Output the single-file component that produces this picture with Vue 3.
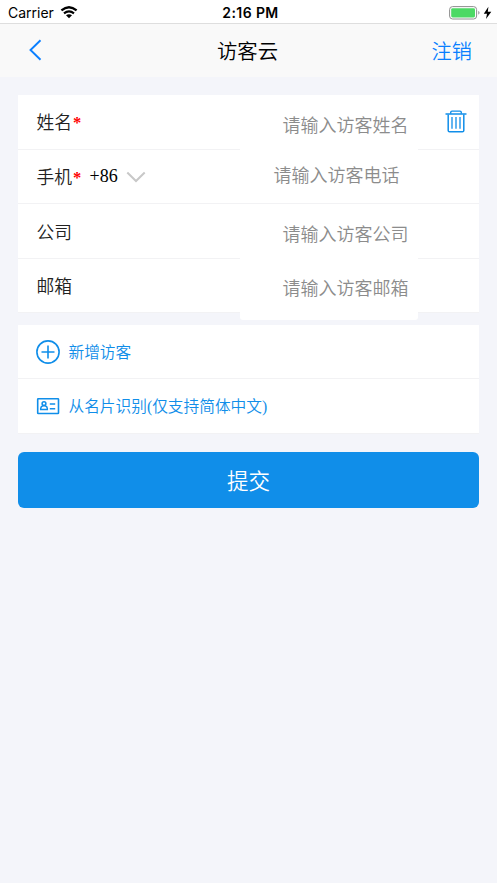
<script setup>
import { reactive } from 'vue'

const fields = reactive([
  { key: 'name', label: '姓名', required: true, hint: '请输入访客姓名', removable: true, value: '' },
  { key: 'phone', label: '手机', required: true, hint: '请输入访客电话', code: '+86', value: '' },
  { key: 'company', label: '公司', hint: '请输入访客公司', value: '' },
  { key: 'email', label: '邮箱', hint: '请输入访客邮箱', value: '' }
])
</script>

<template>
  <div class="screen">
    <div class="status">
      <div class="carrier">
        <span>Carrier</span>
        <svg width="18" height="13" viewBox="0 0 18 13">
          <path d="M1.4 4.4 Q9 -2 16.6 4.4" fill="none" stroke="#000" stroke-width="2.3" />
          <path d="M4 7.4 Q9 3.2 14 7.4" fill="none" stroke="#000" stroke-width="2.1" />
          <path d="M6 9.3 Q9 7 12 9.3 L9 12.3Z" />
        </svg>
      </div>
      <span class="time">2:16 PM</span>
      <div class="power">
        <svg width="43" height="14" viewBox="0 0 43 14">
          <rect x=".6" y=".6" width="27" height="12.4" rx="3" fill="#fff" stroke="#8e8e8e" stroke-width="1" />
          <rect x="2.2" y="2.2" width="23.8" height="9.2" rx="1.4" fill="#4cd964" />
          <path d="M29.3 4.8 Q31.8 6.8 29.3 8.8Z" fill="#8e8e8e" />
          <path d="M39.4 .8 L34.8 7.7 H38 L37 13 L42.3 5.8 H38.8Z" />
        </svg>
      </div>
    </div>

    <header class="nav">
      <svg class="back" width="14" height="22" viewBox="0 0 14 22">
        <path d="M12.5 1.3 L2.5 11 L12.5 20.7" fill="none" stroke="#0a7fff" stroke-width="1.9" />
      </svg>
      <h1>访客云</h1>
      <a class="logout">注销</a>
    </header>

    <main>
      <section class="card form">
        <div v-for="f in fields" :key="f.key" class="row" :class="f.key">
          <label>{{ f.label }}<i v-if="f.required">*</i></label>
          <span v-if="f.code" class="code">{{ f.code }}
            <svg width="20" height="12" viewBox="0 0 20 12">
              <path d="M1.3 1.5 L10 10 L18.7 1.5" fill="none" stroke="#c8c8c8" stroke-width="2" />
            </svg>
          </span>
          <input v-model="f.value" :placeholder="f.hint" />
          <div class="tail">
            <svg v-if="f.removable" width="22" height="23" viewBox="0 0 22 23" fill="none" stroke="#108ee9">
              <path d="M.5 4 H21.5" stroke-width="1.5" />
              <path d="M5.7 3.8 V2.4 Q5.7 1.1 7 1.1 H15 Q16.3 1.1 16.3 2.4 V3.8" stroke-width="1.4" />
              <path d="M3.2 4.5 V20.4 Q3.2 21.8 4.6 21.8 H17.4 Q18.8 21.8 18.8 20.4 V4.5" stroke-width="1.5" />
              <path d="M7 7 V18.8 M11 7 V18.8 M15 7 V18.8" stroke-width="1.3" />
            </svg>
          </div>
        </div>
      </section>

      <section class="card actions">
        <div class="action">
          <svg width="24" height="24" viewBox="0 0 24 24" fill="none" stroke="#108ee9" stroke-width="1.6">
            <circle cx="12" cy="12" r="11.1" />
            <path d="M5.5 12 H18.5 M12 5.5 V18.5" />
          </svg>
          <span>新增访客</span>
        </div>
        <div class="action">
          <svg width="24" height="24" viewBox="0 0 24 24" fill="none" stroke="#108ee9" stroke-width="1.6">
            <rect x="1.7" y="4.7" width="20.8" height="14.8" rx=".6" />
            <circle cx="8" cy="9.6" r="1.9" stroke-width="1.5" />
            <path d="M4.7 15.6 V14.3 Q4.9 12.4 6.8 11.7 H9.2 Q11.2 12.4 11.3 14.3 V15.6Z" stroke-width="1.5" />
            <path d="M13.8 10 H19.2 M13.8 14.8 H19.2" stroke-width="1.5" />
          </svg>
          <span>从名片识别(仅支持简体中文)</span>
        </div>
      </section>

      <button class="submit">提交</button>
    </main>
  </div>
</template>

<style>
body {
  margin: 0;
  background: #f4f5fa;
}
</style>

<style scoped>
.screen {
  min-height: 883px;
  box-sizing: border-box;
  background: #f4f5fa;
  font-family: "Liberation Serif", "Noto Sans CJK SC DemiLight", "Noto Sans CJK SC", serif;
  font-weight: 350;
}
.status {
  display: grid;
  grid-template-columns: 1fr auto 1fr;
  align-items: center;
  height: 24px;
  box-sizing: border-box;
  padding: 2px 5px 0 8px;
  border-bottom: 1px solid #dedede;
  background: #fff;
  font-family: Inter, sans-serif;
  font-size: 14px;
  font-weight: 400;
  color: #000;
}
.carrier {
  display: flex;
  align-items: center;
  gap: 6px;
}
.time {
  padding-left: 1px;
  font-weight: 600;
  letter-spacing: .4px;
}
.power {
  display: flex;
  justify-content: flex-end;
}
.nav {
  display: grid;
  grid-template-columns: 1fr auto 1fr;
  align-items: center;
  box-sizing: border-box;
  height: 53px;
  padding: 0 25px 2px 28px;
  background: #f9f9f9;
}
.nav h1 {
  margin: 0 5px 0 0;
  font-size: 20.4px;
  font-weight: 350;
  color: #000;
}
.logout {
  justify-self: end;
  padding-top: 1px;
  font-size: 20.2px;
  color: #0a7fff;
}
main {
  display: flex;
  flex-direction: column;
  padding: 18px 18px 0;
}
.card {
  background: #fff;
}
.row {
  display: flex;
  align-items: center;
  box-sizing: border-box;
  height: 54.4px;
  padding-left: 18.5px;
  border-bottom: 1px solid #f2f2f4;
}
.name {
  height: 55px;
}
label {
  padding-bottom: 1px;
  font-size: 17.8px;
  color: #222;
}
.name label,
.phone label {
  padding-bottom: 2px;
}
label i {
  display: inline-block;
  width: 9.5px;
  padding-left: 1px;
  box-sizing: border-box;
  font-size: 16.5px;
  font-style: normal;
  font-weight: 700;
  line-height: 1;
  vertical-align: 1px;
  color: #f00;
}
.code {
  display: flex;
  align-items: center;
  gap: 8px;
  margin-left: 8px;
  font-size: 18px;
  color: #000;
}
input {
  width: 178px;
  height: 60px;
  box-sizing: border-box;
  flex: none;
  margin: 5px 0 -4px auto;
  padding: 0 9px 0 0;
  border: 0;
  border-radius: 3px;
  outline: 0;
  background: #fff;
  font: inherit;
  font-size: 18px;
  text-align: right;
}
.name input {
  margin: 4px 0 -4px auto;
  padding-right: 9.5px;
}
input::placeholder {
  color: #8c8c8c;
  opacity: 1;
}
.phone input {
  height: 40px;
  margin: 0 0 1px auto;
  padding-right: 18.5px;
}
.company input,
.email input {
  padding-right: 9.5px;
}
.email input {
  height: 60px;
  margin: 4px 0 -5px auto;
}
.tail {
  display: flex;
  justify-content: center;
  width: 61px;
  padding: 0 0 1px 15px;
  box-sizing: border-box;
}
.actions {
  margin-top: 12px;
}
.action {
  display: flex;
  align-items: center;
  gap: 8.5px;
  height: 54.2px;
  box-sizing: border-box;
  padding-left: 18px;
  border-bottom: 1px solid #f2f2f4;
  font-size: 15.7px;
  color: #108ee9;
}
.action span {
  padding-bottom: 1px;
}
.submit {
  height: 56.5px;
  margin-top: 18.4px;
  padding: 0 0 1px;
  border: 0;
  border-radius: 6px;
  background: #108ee9;
  color: #fff;
  font: inherit;
  font-size: 21.5px;
}
</style>
